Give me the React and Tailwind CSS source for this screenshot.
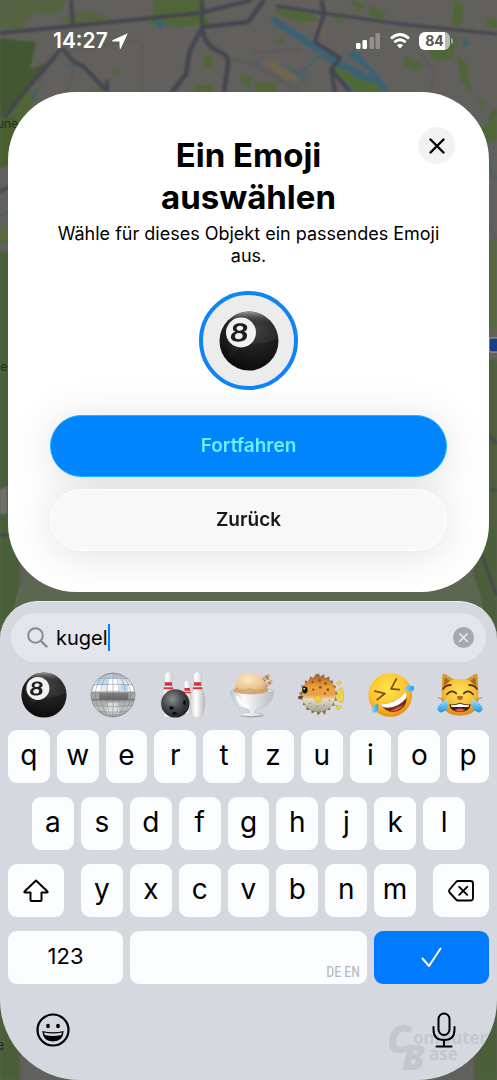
import React, { useId, useState } from "react";

function MapBackdrop() {
  return (
    <svg
      className="absolute inset-0 h-full w-full"
      viewBox="0 0 497 1080"
      preserveAspectRatio="xMidYMin slice"
      aria-hidden="true"
    >
      <defs>
        <filter id="map-soft" x="0" y="0" width="1" height="1">
          <feGaussianBlur stdDeviation="1" />
        </filter>
      </defs>
      <rect width="497" height="1080" fill="#62605c" />
      <g filter="url(#map-soft)">
        <g fill="#4f6639">
          <path d="M0 38L36 42L30 70L46 62L30 88L12 118L0 126Z" fill="#435831" />
          <path d="M0 0H66L60 12L48 16L32 12L22 30L0 28Z" fill="#56643f" />
          <path d="M62 18L84 10L110 18L94 24L66 26Z" fill="#56643f" />
          <path d="M155 0H200V8L212 24L178 27L148 24L152 16Z" />
          <path d="M278 4L300 8L320 20L300 22L276 14Z" />
          <path d="M330 14L344 12L340 24Z" />
          <path d="M350 0L366 4L358 12Z" />
          <path d="M372 6L388 14L378 20L368 14Z" />
          <path d="M430 30L456 38L452 58L436 62L428 50Z" />
          <path d="M456 54L466 62L472 92L462 84Z" />
          <path d="M404 56L424 64L416 72L404 66Z" />
          <path d="M240 74L252 78L250 88L242 84Z M256 82L276 82V92H256Z" />
          <path d="M204 54L214 58L210 70L203 66Z M224 54L234 62L228 68Z" />
          <path d="M114 68L120 72L116 76Z M100 86L110 88L104 92H92Z M194 85H214V92H194Z" />
          <path d="M276 40L284 36L282 44Z M342 84L350 88Z M454 0L464 6L460 28L452 24Z" />
          <path d="M486 16L497 20V28L486 26Z M478 94L484 102L482 116Z M490 112L497 108V128L488 122Z" />
          <path d="M0 118L26 92L42 86L14 140L0 160Z" />
          <path d="M0 116H16L8 166L0 168Z" fill="#48612f" />
          <path d="M0 252H20V1080H0Z" fill="#4a5f39" />
          <path d="M0 228L10 224V244H0Z M480 240H497V330H480Z" fill="#556940" />
          <path d="M474 360H497V1080H474Z" fill="#4b5f3a" />
          <path d="M470 130L497 122V140L480 146Z" />
        </g>
        <path d="M0 490L7 486V514H0Z" fill="#706f6a" />
        <g fill="#3a6273">
          <path d="M347 53L355 50Q368 62 378 76Q388 84 387 92H350L334 74L330 62L318 56L332 50L344 62L360 70L366 76L372 72L358 64Z" />
          <path d="M274 16C290 28 306 36 324 50L320 54C300 42 288 34 270 22Z" />
          <path d="M154 20L166 22L160 30Z M66 60L74 66L68 66Z M32 90L38 94L34 100Z M464 36L470 44L464 48Z" />
        </g>
        <path d="M334 67Q346 68 356 78L376 84L384 92H356L344 80L334 74Z" fill="#506a34" />
        <path d="M262 62L276 60L300 80L286 80Z M310 22L326 28L322 36Z" fill="#71654f" />
        <g fill="none" stroke="#3c6470" strokeWidth="2">
          <path d="M280 64L306 78L300 74L318 56M252 60L262 66M302 76L306 84" />
          <path d="M486 150Q490 176 497 178M8 210L0 218" />
        </g>
        <g fill="none" stroke="#55545a" strokeWidth="1.2">
          <path d="M38 84Q54 56 64 54Q100 44 140 40M72 64Q74 84 66 92M142 42V92" />
          <path d="M232 58Q260 66 300 92M320 10V0M420 52L434 72L430 92M252 52L300 50" />
          <path d="M486 122L497 112M488 226L497 240" />
        </g>
        <g fill="none" stroke="#454550" strokeLinejoin="round">
          <path d="M0 33L72 26L200 13L252 0" strokeWidth="4" />
          <path d="M71 0L73 26M202 0V28M322 0L324 14L315 42L340 58L331 70L335 92M332 70L350 92" strokeWidth="4" />
          <path d="M202 27L248 22L264 0M202 28L190 50L186 74L172 92" strokeWidth="4.500" />
          <path d="M202 28Q204 46 222 53Q229 56 228 64L224 92" strokeWidth="4.500" />
          <path d="M60 50L28 88L4 118M62 48L74 62L84 67L106 90M107 80V92" strokeWidth="4" />
          <path d="M276 6L330 14L400 24L497 34" strokeWidth="3" />
          <path d="M0 192L10 186M0 535H12M490 490H497M482 556L497 596M486 432L497 444" strokeWidth="3" />
        </g>
      </g>
      <rect x="489" y="338" width="12" height="14" rx="2" fill="#193f80" stroke="#a3a8ae" />
      <path d="M12 620Q18 575 36 560H461Q479 575 485 620Z" fill="#5c6751" />
      <g fontFamily="Inter, sans-serif" fontSize="12" fill="#222c25">
        <text x="-3" y="128">une</text>
        <text x="-7" y="371">de</text>
        <text x="-4" y="1050" fontSize="14">e</text>
      </g>
    </svg>
  );
}

function EightBall({ className }) {
  const id = useId();
  return (
    <svg viewBox="0 0 60 60" className={className} aria-hidden="true">
      <defs>
        <radialGradient id={id} cx="0.6" cy="0.3" r="0.75">
          <stop offset="0" stopColor="#404040" />
          <stop offset="0.5" stopColor="#2a2a2a" />
          <stop offset="1" stopColor="#080808" />
        </radialGradient>
        <linearGradient id={id + "h"} x1="0" y1="0" x2="0" y2="1">
          <stop offset="0" stopColor="#9a9a9a" />
          <stop offset="0.2" stopColor="#3a3a3a" stopOpacity="0" />
        </linearGradient>
      </defs>
      <circle cx="30" cy="30" r="29.5" fill={`url(#${id})`} />
      <circle cx="30" cy="30" r="29.5" fill={`url(#${id}h)`} />
      <path d="M27 33Q46 34 59 27Q58 46 42 56Q26 59 12 50Q16 40 27 33Z" fill="#0c0c0c" opacity=".4" />
      <circle cx="22" cy="21.500" r="15" fill="#f1f1f1" />
      <path
        fill="#1f1f1f"
        fillRule="evenodd"
        d="M21 12.300C25.500 12.300 28.400 14 28.200 16.800C28.100 18.700 26.900 20 25 20.600C27.200 21.300 28.200 22.900 28 25C27.700 28.700 24.300 30.700 19.300 30.700C14.400 30.700 11.600 28.800 11.900 25.500C12.100 23.200 13.700 21.400 16.300 20.700C14.600 20 13.700 18.700 13.900 17C14.200 14 17 12.300 21 12.300ZM20.900 14.700C18.900 14.700 17.700 15.700 17.600 17.200C17.500 18.800 18.500 19.700 20.500 19.700C22.700 19.700 24.100 18.700 24.200 17.100C24.300 15.600 23.100 14.700 20.900 14.700ZM20 22.100C17.600 22.100 16.100 23.300 16 25.200C15.900 27 17.200 28.200 19.500 28.200C22 28.200 23.600 27 23.700 25.100C23.800 23.200 22.500 22.100 20 22.100Z"
      />
    </svg>
  );
}

function MirrorBall({ className }) {
  return (
    <svg viewBox="0 0 60 60" className={className} aria-hidden="true">
      <defs>
        <linearGradient id="mb-fill" x1="0" y1="0" x2="0" y2="1">
          <stop offset="0" stopColor="#b4bac0" />
          <stop offset="0.22" stopColor="#e2eaf1" />
          <stop offset="0.43" stopColor="#e6ecf1" />
          <stop offset="0.45" stopColor="#83817f" />
          <stop offset="0.6" stopColor="#686563" />
          <stop offset="0.64" stopColor="#a9a7a5" />
          <stop offset="0.8" stopColor="#c4c4c4" />
          <stop offset="1" stopColor="#a9a9aa" />
        </linearGradient>
        <clipPath id="mb-clip"><circle cx="30" cy="30" r="29" /></clipPath>
      </defs>
      <circle cx="30" cy="30" r="29" fill="url(#mb-fill)" />
      <g clipPath="url(#mb-clip)">
        <path d="M10 9H23V17H8ZM40 15H50V24H40ZM23 3H30V10H23Z" fill="#b9daf4" />
        <path d="M23 9H38V24H23ZM6 17H16V25H4ZM50 17H57V25H50Z" fill="#fff" opacity=".9" />
        <path d="M0 27H12V36H0ZM50 27H60V36H50Z" fill="#a5a4a3" />
        <path d="M22 40H38V54H22Z" fill="#eaeaea" opacity=".7" />
        <g fill="none" stroke="#6d7479" strokeWidth="1" opacity=".55">
          <path d="M0 9Q30 6 60 9M0 17Q30 15 60 17M0 26Q30 25 60 26M0 35Q30 37 60 35M0 43Q30 47 60 43M0 50Q30 55 60 50" />
          <path d="M30 0V60" />
          <ellipse cx="30" cy="30" rx="8" ry="29" />
          <ellipse cx="30" cy="30" rx="16" ry="29" />
          <ellipse cx="30" cy="30" rx="23" ry="29" />
        </g>
      </g>
      <circle cx="30" cy="30" r="28.500" fill="none" stroke="#8f9193" />
    </svg>
  );
}

function Pin({ transform }) {
  return (
    <g transform={transform}>
      <path
        d="M10 0C14 0 16 3 15.600 7C15 12 14 14 16 21C18 27 20 32 19.500 42C19 50 17 57 15.500 59H4.500C3 57 1 50 .5 42C0 32 2 27 4 21C6 14 5 12 4.400 7C4 3 6 0 10 0Z"
        fill="url(#pin-fill)"
        stroke="#b8b8ba"
        strokeWidth=".5"
      />
      <path d="M5.300 13.500H14.700V16.500L15 18H5L5.300 16.500ZM4.400 20H15.600L16.400 22.500H3.600Z" fill="#dc2f35" />
    </g>
  );
}

function Bowling({ className }) {
  return (
    <svg viewBox="0 0 60 60" className={className} aria-hidden="true">
      <defs>
        <linearGradient id="pin-fill">
          <stop offset="0" stopColor="#d3d3d5" />
          <stop offset="0.4" stopColor="#fff" />
          <stop offset="1" stopColor="#b5b5b8" />
        </linearGradient>
        <radialGradient id="bowl-fill" cx=".4" cy=".35" r=".65">
          <stop offset="0" stopColor="#8c8e90" />
          <stop offset=".5" stopColor="#4b4d4f" />
          <stop offset="1" stopColor="#222426" />
        </radialGradient>
      </defs>
      <Pin transform="translate(1 0)" />
      <Pin transform="translate(28 11) scale(.75 .74)" />
      <Pin transform="translate(39 0)" />
      <circle cx="20" cy="41" r="18.500" fill="url(#bowl-fill)" />
      <g fill="#0b0c0d">
        <ellipse cx="32" cy="40" rx="1.800" ry="3" />
        <ellipse cx="15" cy="47" rx="3" ry="2.200" />
        <ellipse cx="19" cy="54" rx="3.200" ry="2" />
      </g>
    </svg>
  );
}

function IceCream({ className }) {
  return (
    <svg viewBox="0 0 60 60" className={className} aria-hidden="true">
      <defs>
        <radialGradient id="scoop" cx=".42" cy=".3" r=".7">
          <stop offset="0" stopColor="#fbe8c6" />
          <stop offset=".6" stopColor="#ebc896" />
          <stop offset="1" stopColor="#cf9f66" />
        </radialGradient>
        <linearGradient id="glass">
          <stop offset="0" stopColor="#c3c6ca" />
          <stop offset=".3" stopColor="#fbfbfc" />
          <stop offset=".6" stopColor="#dfe0e2" />
          <stop offset="1" stopColor="#b9bcbf" />
        </linearGradient>
      </defs>
      <path d="M38 10L50 3Q54 2 54 6L43 17ZM41 18L55 10Q58 11 56 15L43 25Z" fill="#dcae88" />
      <path d="M43 8L47 13M48 5L52 10M46 17L49 20M52 13L54 16" stroke="#8f6350" strokeWidth="1.600" />
      <ellipse cx="30" cy="25" rx="28" ry="4" fill="#e8e9eb" stroke="#b9bbbd" />
      <path d="M9 22Q6 2 27 1Q46 1 48 20Q56 24 46 27Q28 31 8 27Q2 24 9 22Z" fill="url(#scoop)" />
      <path d="M8 21Q17 27 26 22Q36 27 49 22" fill="none" stroke="#d2a067" strokeWidth="1.500" />
      <path d="M2 25Q30 33 58 25Q57 44 38 48Q34 49 34 53Q44 53 46 57Q30 62 14 57Q16 53 27 53Q27 49 22 48Q4 44 2 25Z" fill="url(#glass)" stroke="#b7babd" strokeWidth=".8" />
      <path d="M11 33Q15 43 25 45" fill="none" stroke="#fff" strokeWidth="3" strokeLinecap="round" />
      <path d="M16 57Q30 60 44 57" fill="none" stroke="#909397" strokeWidth="1.200" />
    </svg>
  );
}

function Blowfish({ className }) {
  return (
    <svg viewBox="0 0 60 60" className={className} aria-hidden="true">
      <defs>
        <linearGradient id="fish" x1="0" y1="0" x2="0" y2="1">
          <stop offset="0" stopColor="#b86a20" />
          <stop offset=".3" stopColor="#ee9f3a" />
          <stop offset=".52" stopColor="#e6a14c" />
          <stop offset=".65" stopColor="#e6dbc2" />
          <stop offset="1" stopColor="#a4a095" />
        </linearGradient>
      </defs>
      <path d="M46 28L57 20Q62 30 58 40Q52 39 46 33ZM50 15Q53 10 57 14L53 18ZM49 43L57 45Q56 50 51 49Z" fill="#ead552" stroke="#c7a633" strokeWidth=".6" />
      <path d="M27 2L29 6L34 3L35 8L41 6L41 11L46 11L45 16L50 19L47 23L52 28L48 31L51 37L46 38L48 44L42 44L42 50L37 49L35 56L31 51L26 57L24 51L18 54L17 49L11 50L11 44L6 43L8 38L3 35L6 31L1 28L6 24L4 18L9 17L9 11L14 12L16 6L20 8L23 3Z" fill="#897052" />
      <ellipse cx="27" cy="29" rx="22" ry="23" fill="url(#fish)" />
      <path d="M0 32Q5 29 7 32Q6 35 1 36Z" fill="#5f4d37" />
      <g fill="#8c4f1e"><circle cx="19" cy="13" r="1.500" /><circle cx="28" cy="11" r="1.800" /><circle cx="36" cy="15" r="1.600" /><circle cx="20" cy="23" r="1.500" /><circle cx="29" cy="20" r="1.700" /><circle cx="39" cy="23" r="1.700" /><circle cx="35" cy="28" r="1.300" /></g>
      <g fill="#8b8779"><circle cx="16" cy="41" r="1" /><circle cx="25" cy="45" r="1" /><circle cx="34" cy="43" r="1" /><circle cx="41" cy="37" r="1" /></g>
      <ellipse cx="9" cy="23.500" rx="3.500" ry="4.500" fill="#171310" />
      <circle cx="8" cy="22" r="1.100" fill="#fff" />
      <path d="M22 32Q26 28 31 34Q31 40 25 39Q21 37 22 32Z" fill="#f7cf32" stroke="#d99c24" strokeWidth=".7" />
    </svg>
  );
}

function Rofl({ className }) {
  return (
    <svg viewBox="0 0 60 60" className={className} aria-hidden="true">
      <defs>
        <radialGradient id="rofl-face" cx=".45" cy=".35" r=".65">
          <stop offset="0" stopColor="#ffe54d" />
          <stop offset=".65" stopColor="#fdc32f" />
          <stop offset="1" stopColor="#e78d13" />
        </radialGradient>
        <linearGradient id="rofl-tear" x1="0" x2="1">
          <stop offset="0" stopColor="#86d7fb" /><stop offset="1" stopColor="#259fe8" />
        </linearGradient>
      </defs>
      <circle cx="29" cy="30" r="28.500" fill="url(#rofl-face)" />
      <path d="M9 25L22 28L12 36M37 9L30 22L41 23" fill="none" stroke="#7c4c12" strokeWidth="2.200" strokeLinecap="round" strokeLinejoin="round" />
      <path d="M16 42Q36 42 49 26Q54 42 41 50Q27 57 16 42Z" fill="#6a3015" />
      <path d="M16 42Q36 42 49 26Q51 30 50 34Q38 49 20 46Z" fill="#fff" />
      <path d="M29 51Q38 45 47 43Q38 53 29 51Z" fill="#e84f43" />
      <path d="M47 22Q49 16 56 18Q62 18 60 23Q56 28 47 22Z" fill="url(#rofl-tear)" />
      <path d="M13 41Q15 48 11 52Q6 55 5 50Q5 44 13 41Z" fill="url(#rofl-tear)" />
    </svg>
  );
}

function JoyCat({ className }) {
  return (
    <svg viewBox="0 0 60 60" className={className} aria-hidden="true">
      <defs>
        <radialGradient id="cat-face" cx=".5" cy=".35" r=".65">
          <stop offset="0" stopColor="#ffe45c" />
          <stop offset=".6" stopColor="#f8bf38" />
          <stop offset="1" stopColor="#d98a1e" />
        </radialGradient>
        <linearGradient id="cat-tear" x1="0" y1="0" x2="0" y2="1">
          <stop offset="0" stopColor="#a3e1fb" /><stop offset="1" stopColor="#1c97e5" />
        </linearGradient>
      </defs>
      <path d="M6 28L7 4Q8 1 11 3L24 11H36L49 3Q52 1 53 4L54 28Z" fill="#dc9a28" />
      <path d="M9 17L10 7L19 13ZM51 17L50 7L41 13Z" fill="#a9662b" />
      <path d="M30 9Q52 9 54 32Q55 57 30 57Q5 57 6 32Q8 9 30 9Z" fill="url(#cat-face)" />
      <path d="M1 33L8 36M59 33L52 36" stroke="#9a7138" strokeWidth="1" />
      <path d="M8 22Q11 17 18 17M52 22Q49 17 42 17M13 29Q19 22 25 28M35 28Q41 22 47 29" fill="none" stroke="#573410" strokeWidth="2.400" strokeLinecap="round" />
      <path d="M26 32Q30 30 34 32Q34 36 30 37Q26 36 26 32Z" fill="#b76532" />
      <path d="M16 42Q23 43 30 40Q37 43 44 42Q43 52 30 52Q17 52 16 42Z" fill="#46200f" />
      <path d="M18 43Q23 44 30 41.500Q37 44 42 43L41 45.500H19Z" fill="#fff" />
      <path d="M23 50Q30 45 37 50Q30 53 23 50Z" fill="#ed5a4a" />
      <path d="M14 35Q17 45 10 51Q4 55 1 50Q-1 43 14 35ZM46 35Q43 45 50 51Q56 55 59 50Q61 43 46 35Z" fill="url(#cat-tear)" />
    </svg>
  );
}

const emojis = [
  ["Billardkugel", EightBall],
  ["Discokugel", MirrorBall],
  ["Bowling", Bowling],
  ["Eiskugel", IceCream],
  ["Kugelfisch", Blowfish],
  ["Kugelt sich vor Lachen", Rofl],
  ["Katze mit Freudentränen", JoyCat],
];

function Key({ children, className = "", ...rest }) {
  return (
    <button
      type="button"
      className={"flex h-[53px] min-w-0 items-center justify-center rounded-[9px] bg-[#fbfdfe] text-[28px] leading-8 text-black " + className}
      {...rest}
    >
      {children}
    </button>
  );
}

function Letter({ char }) {
  return (
    <Key>
      <span className="pb-1">{char}</span>
    </Key>
  );
}

function StatusBar() {
  return (
    <header className="flex h-[92px] items-start justify-between pt-[27px] pr-11 pl-[53px] text-white">
      <div className="flex h-7 items-center gap-1">
        <span className="text-[21px] leading-7 font-semibold">14:27</span>
        <svg className="h-4 w-4" viewBox="0 0 16 16" aria-hidden="true">
          <path d="M15.800 .3L.4 7.200Q-.3 8.300.8 8.400L7.400 8.600L7.700 15.200Q7.900 16.400 8.800 15.500Z" fill="currentColor" />
        </svg>
      </div>
      <div className="flex h-7 items-center">
        <svg className="h-4 w-6" viewBox="0 0 24 16" fill="currentColor" aria-hidden="true">
          <rect x="0" y="10" width="4.500" height="6" rx="1.200" />
          <rect x="6.500" y="7" width="4.500" height="9" rx="1.200" />
          <rect x="13.500" y="4" width="4.500" height="12" rx="1.200" opacity=".3" />
          <rect x="19.500" y="0" width="4.500" height="16" rx="1.200" opacity=".3" />
        </svg>
        <svg className="ml-[10px] h-4 w-5" viewBox="0 0 20 16" fill="none" stroke="currentColor" strokeWidth="2.800" aria-hidden="true">
          <path d="M1 5.500Q10-2.500 19 5.500M4.300 9.200Q10 4.200 15.700 9.200" />
          <path d="M10 15.500L6.800 12.200Q10 9.600 13.200 12.200Z" fill="currentColor" stroke="none" />
        </svg>
        <div className="ml-[9px] flex h-[18px] w-[31px] items-center justify-center rounded-[6px] bg-linear-to-r from-white from-84% to-[#b9b9b7] to-84% text-[14px] leading-[18px] font-bold text-[#55554f]">
          84
        </div>
        <div className="ml-px h-[6px] w-[2px] rounded-r-full bg-[#a2a29e]" />
      </div>
    </header>
  );
}

function Watermark() {
  return (
    <svg
      className="pointer-events-none absolute right-[8px] bottom-[8px] h-[50px] w-[102px]"
      viewBox="0 0 102 50"
      fill="#c4c8cc"
      fontFamily="'Open Sans', sans-serif"
      fontWeight="700"
    >
      <text x="0" y="31" fontSize="38" fontStyle="italic" fontWeight="800">C</text>
      <text x="26" y="22" fontSize="17">omputer</text>
      <text x="15" y="48" fontSize="36" fontStyle="italic" fontWeight="800">B</text>
      <text x="42" y="38" fontSize="17">ase</text>
    </svg>
  );
}

export default function App() {
  const [query, setQuery] = useState("kugel");
  return (
    <div className="relative isolate flex min-h-screen flex-col overflow-hidden font-['Inter',sans-serif] text-black">
      <div className="absolute inset-0 -z-10">
        <MapBackdrop />
      </div>
      <StatusBar />

      <main className="relative mx-2 flex flex-col items-center rounded-[68px] bg-white px-[42px] pt-[42px] pb-[41px] text-center">
        <button
          type="button"
          aria-label="Schließen"
          className="absolute top-[35px] right-[34px] flex h-[37px] w-[37px] items-center justify-center rounded-full bg-[#f2f2f2]"
        >
          <svg className="h-4 w-4" viewBox="0 0 16 16" stroke="#000" strokeWidth="2.400" strokeLinecap="round" aria-hidden="true">
            <path d="M1.500 1.500L14.500 14.500M14.500 1.500L1.500 14.500" />
          </svg>
        </button>
        <h1 className="max-w-[240px] text-[33px] leading-[42px] font-bold">Ein Emoji auswählen</h1>
        <p className="mt-[5px] text-[18px] leading-[22px]">
          Wähle für dieses Objekt ein passendes Emoji aus.
        </p>
        <div className="mt-6 flex h-[99px] w-[99px] items-center justify-center rounded-full border-4 border-[#0f84f5] bg-[#ececec]">
          <EightBall className="h-[60px] w-[60px]" />
        </div>
        <div className="mt-[25px] flex w-full flex-col gap-3 [filter:drop-shadow(0_4px_20px_rgba(0,0,0,0.12))]">
          <button
            type="button"
            className="h-[62px] w-full rounded-full border border-[#1fb4ff] bg-[#0085ff] text-[19px] font-semibold text-[#6fecff]"
          >
            Fortfahren
          </button>
          <button
            type="button"
            className="h-[62px] w-full rounded-full border border-white bg-[#f8f8f8] text-[19px] font-semibold text-[#181818]"
          >
            Zurück
          </button>
        </div>
      </main>

      <section
        aria-label="Tastatur"
        className="relative mt-[9px] flex grow flex-col rounded-t-[38px] rounded-b-[80px] border-t border-[#eceff1] bg-[#d5d9df] pt-[11px]"
      >
        <div className="mx-[11px] flex h-[49px] items-center rounded-full bg-[#e2e6eb] pr-3 pl-4">
          <svg className="h-[21px] w-[21px]" viewBox="0 0 21 21" fill="none" stroke="#85898d" strokeWidth="2" strokeLinecap="round" aria-hidden="true">
            <circle cx="8.500" cy="8.500" r="7.300" />
            <path d="M14 14L19.500 19.500" strokeWidth="2.400" />
          </svg>
          <input
            type="text"
            aria-label="Emoji suchen"
            value={query}
            onChange={(e) => setQuery(e.target.value)}
            className="ml-2 [field-sizing:content] bg-transparent text-[20px] leading-6 outline-none"
          />
          <span className="h-[27px] w-[2px] bg-[#087bff]" />
          <button
            type="button"
            aria-label="Suche löschen"
            onClick={() => setQuery("")}
            className="ml-auto flex h-[21px] w-[21px] items-center justify-center rounded-full bg-[#a5a9ad]"
          >
            <svg className="h-[9px] w-[9px]" viewBox="0 0 9 9" stroke="#eef0f2" strokeWidth="1.500" strokeLinecap="round" aria-hidden="true">
              <path d="M.8.8L8.200 8.200M8.200.8L.8 8.200" />
            </svg>
          </button>
        </div>

        <div className="mt-[10px] flex justify-between pr-[14px] pl-[21px]">
          {emojis.map(([name, Icon]) => (
            <button key={name} type="button" aria-label={name}>
              <Icon className="h-[46px] w-[46px]" />
            </button>
          ))}
        </div>

        <div className="mt-3 flex flex-col gap-[14px] px-2">
          <div className="grid grid-cols-10 gap-[7px]">
            {[..."qwertzuiop"].map((c) => <Letter key={c} char={c} />)}
          </div>
          <div className="grid grid-cols-9 gap-[7px] px-6">
            {[..."asdfghjkl"].map((c) => <Letter key={c} char={c} />)}
          </div>
          <div className="grid grid-cols-[56px_1fr_56px] gap-[17px]">
            <Key aria-label="Umschalttaste">
              <svg className="h-6 w-[26px]" viewBox="0 0 26 24" fill="none" stroke="#000" strokeWidth="2" strokeLinejoin="round" aria-hidden="true">
                <path d="M13 1.500L24.500 12.500Q24.800 13.500 24 13.500H18.500V21Q18.500 22 17.500 22H8.500Q7.500 22 7.500 21V13.500H2Q1.200 13.500 1.500 12.500Z" />
              </svg>
            </Key>
            <div className="grid grid-cols-7 gap-[7px]">
              {[..."yxcvbnm"].map((c) => <Letter key={c} char={c} />)}
            </div>
            <Key aria-label="Löschen">
              <svg className="h-6 w-[26px]" viewBox="0 0 26 24" fill="none" stroke="#000" strokeWidth="1.900" strokeLinejoin="round" strokeLinecap="round" aria-hidden="true">
                <path d="M10 2H22.500Q25 2 25 4.500V19Q25 21.500 22.500 21.500H10Q9 21.500 8 20.500L1.600 13.500Q0.600 12 1.600 10.500L8 3Q9 2 10 2Z" />
                <path d="M11.200 7.800L19.200 15.800M19.200 7.800L11.200 15.800" />
              </svg>
            </Key>
          </div>
          <div className="grid grid-cols-[115px_1fr_115px] gap-[7px]">
            <Key>
              <span className="pb-1 text-[22px]">123</span>
            </Key>
            <Key className="items-end justify-end pr-[7px]" aria-label="Leerzeichen, DE EN">
              <span className="font-['Liberation_Sans_Narrow','Roboto_Condensed',sans-serif] text-[14px] leading-6 text-[#b4b7ba]">DE EN</span>
            </Key>
            <button type="button" aria-label="Fertig" className="flex h-[53px] items-center justify-center rounded-[9px] bg-[#007bff]">
              <svg className="h-[21px] w-[21px]" viewBox="0 0 21 21" fill="none" stroke="#fff" strokeWidth="2" strokeLinecap="round" strokeLinejoin="round" aria-hidden="true">
                <path d="M1.500 11.500L8 19L19.500 1.500" />
              </svg>
            </button>
          </div>
        </div>

        <Watermark />
        <div className="relative mt-[28px] flex items-center justify-between pr-[41px] pb-[31px] pl-9">
          <button type="button" aria-label="Emoji">
            <svg className="h-[34px] w-[34px]" viewBox="0 0 34 34" aria-hidden="true">
              <circle cx="17" cy="17" r="15.500" fill="none" stroke="#000" strokeWidth="2.200" />
              <ellipse cx="12" cy="13" rx="1.900" ry="2.300" />
              <ellipse cx="22" cy="13" rx="1.900" ry="2.300" />
              <path d="M6.300 18Q17 20.500 27.700 18Q27 28.500 17 28.500Q7 28.500 6.300 18Z" />
              <path d="M8 19.500Q17 21.500 26 19.500L25.200 22Q17 24 8.800 22Z" fill="#d5d9df" />
            </svg>
          </button>
          <button type="button" aria-label="Diktieren">
            <svg className="h-[36px] w-6" viewBox="0 0 24 36" fill="none" stroke="#000" strokeWidth="2" strokeLinecap="round" aria-hidden="true">
              <rect x="6.500" y="1.500" width="11" height="21.500" rx="5.500" />
              <path d="M1.500 15V17.500Q1.500 28 12 28Q22.500 28 22.500 17.500V15M12 28V34.500M4.500 34.500H19.500" />
            </svg>
          </button>
        </div>
      </section>
    </div>
  );
}
